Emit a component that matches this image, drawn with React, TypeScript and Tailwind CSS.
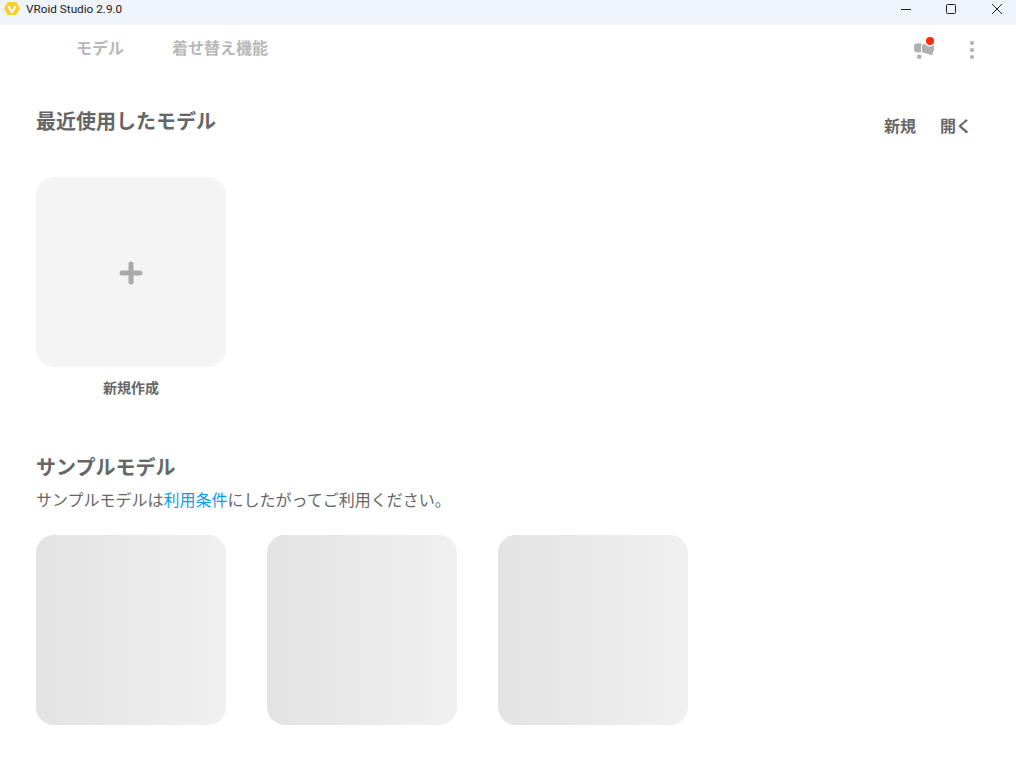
const SampleCard = () => (
  <div className="h-[190px] w-[190px] rounded-[18px] bg-[linear-gradient(90deg,#e3e3e3,#f0f0f0)]" />
)

const AppIcon = () => (
  <svg width="16" height="14" viewBox="0 0 16 14">
    <path d="M4.400 0h7.200c.5 0 .9.3 1.200.7l2.800 5.200c.3.400.3.900 0 1.300l-2.800 5.100c-.3.400-.7.700-1.200.7H4.400c-.5 0-.9-.3-1.200-.7L.4 7.200c-.3-.4-.3-.9 0-1.300L3.200.7C3.500.3 3.900 0 4.400 0z" fill="#fbd024" />
    <path d="M4.800 5 8 10l3.200-5" fill="none" stroke="#fff" strokeWidth="2.200" strokeLinecap="round" strokeLinejoin="round" />
  </svg>
)

const Megaphone = () => (
  <svg width="24" height="24" viewBox="0 0 24 24">
    <path d="M2 10c0-1.500 1-2.500 2.500-2.600L9 7.200v9.400l-4.500-.3C3 16.200 2 15.200 2 13.700z" fill="#b0b0b0" />
    <path d="M10 8.200 22 8v6l-2 5.200-10-3z" fill="#b0b0b0" />
    <circle cx="7.300" cy="20.700" r="2.300" fill="#b0b0b0" />
    <circle cx="18" cy="5" r="5.500" fill="#fff" />
    <circle cx="18" cy="5" r="4" fill="#ff2d00" />
  </svg>
)

export default function App() {
  return (
    <div className="flex h-[780px] w-[1016px] flex-col overflow-hidden bg-white font-['Noto_Sans_CJK_JP','Noto_Sans',sans-serif] text-[#666]">
      <div className="flex h-[25px] items-center bg-[#eff3fa] pb-[7px] pl-1 pr-[13px] font-['Roboto',sans-serif]">
        <AppIcon />
        <span className="ml-[6px] mt-px text-[11.75px] text-[#222]">VRoid Studio 2.9.0</span>
        <div className="ml-auto flex items-center">
          <svg width="12" height="12" viewBox="0 0 12 12"><path d="M1 6.500h10" stroke="#222" strokeWidth="1" /></svg>
          <svg className="ml-[33px]" width="12" height="12" viewBox="0 0 12 12"><rect x="1.500" y="1.500" width="9" height="9" rx="1" fill="none" stroke="#222" strokeWidth="1" /></svg>
          <svg className="ml-[34px]" width="12" height="12" viewBox="0 0 12 12"><path d="M1 1l10 10M11 1 1 11" stroke="#222" strokeWidth="1" /></svg>
        </div>
      </div>

      <div className="flex h-[46px] items-center pl-[76px] pr-[42px]">
        <span className="-mt-[2px] text-base font-bold text-[#b8b8b8]">モデル</span>
        <span className="-mt-[2px] ml-12 text-base font-bold text-[#b8b8b8]">着せ替え機能</span>
        <div className="ml-auto flex items-center gap-[34px]">
          <Megaphone />
          <div className="mt-[3px] flex flex-col gap-[3px]">
            <span className="h-1 w-1 rounded-full bg-[#b0b0b0]" />
            <span className="h-1 w-1 rounded-full bg-[#b0b0b0]" />
            <span className="h-1 w-1 rounded-full bg-[#b0b0b0]" />
          </div>
        </div>
      </div>

      <div className="flex flex-col px-9">
        <div className="mt-[34px] flex items-start justify-between pr-2">
          <h2 className="text-xl font-bold leading-[32px]">最近使用したモデル</h2>
          <div className="mt-[8px] flex gap-6 text-base font-bold leading-6">
            <span>新規</span>
            <span>開く</span>
          </div>
        </div>

        <div className="mt-[40px] flex w-[190px] flex-col items-center">
          <div className="flex h-[190px] w-[190px] items-center justify-center rounded-[18px] bg-[#f4f4f4]">
            <svg className="mt-px" width="24" height="24" viewBox="0 0 24 24">
              <path d="M12 3v18M3 12h18" stroke="#aaa" strokeWidth="5" strokeLinecap="round" />
            </svg>
          </div>
          <span className="mt-[10px] text-sm font-bold leading-5">新規作成</span>
        </div>

        <h2 className="mt-[54px] text-xl font-bold leading-[32px]">サンプルモデル</h2>
        <p className="mt-[4px] text-base leading-6">
          サンプルモデルは<span className="text-[#0d9bf2]">利用条件</span>にしたがってご利用ください。
        </p>

        <div className="mt-[24px] flex gap-[41px]">
          <SampleCard />
          <SampleCard />
          <SampleCard />
        </div>
      </div>
    </div>
  )
}
